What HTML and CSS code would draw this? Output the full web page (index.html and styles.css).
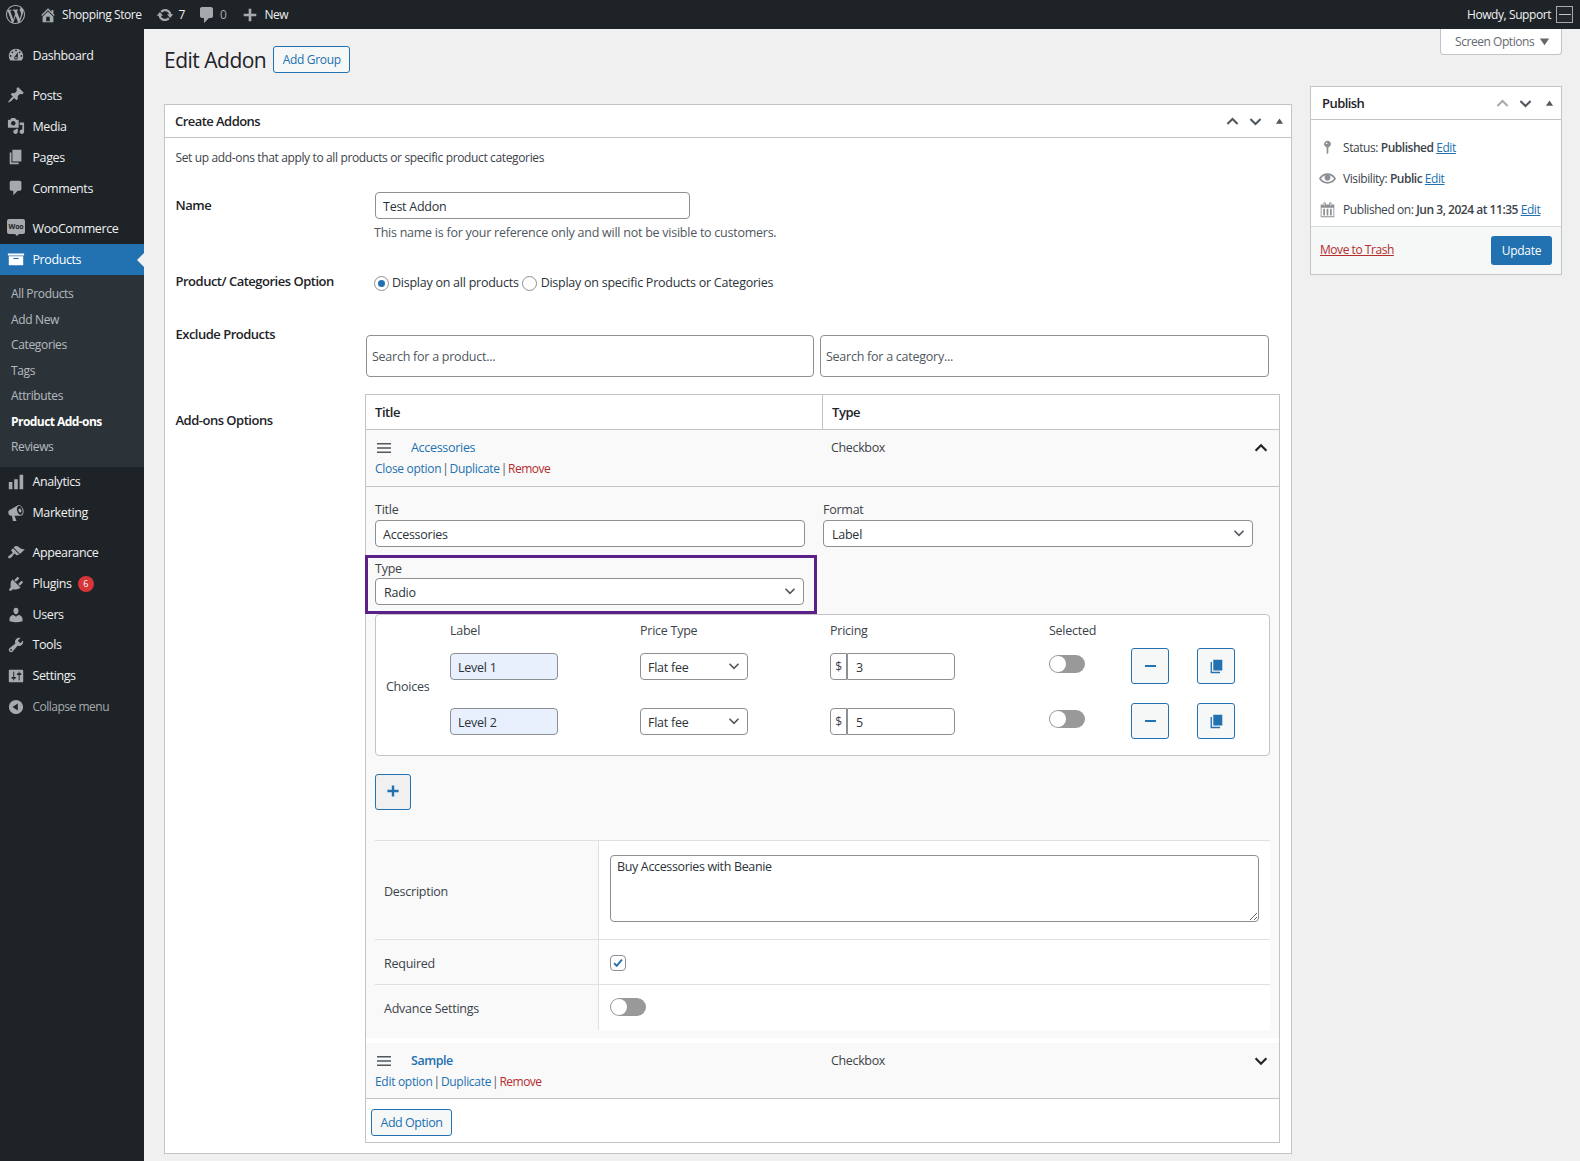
FILE: index.html
```html
<!DOCTYPE html>
<html lang="en">
<head>
    <meta charset="UTF-8">
    <title>Edit Addon</title>
    <link rel="stylesheet" href="styles.css">
</head>
<body>
    <svg class="sprite" xmlns="http://www.w3.org/2000/svg">
        <symbol id="i-wp" viewBox="0 0 20 20"><path d="M20 10c0-5.51-4.49-10-10-10C4.48 0 0 4.49 0 10c0 5.52 4.48 10 10 10 5.51 0 10-4.48 10-10zM7.78 15.37L4.37 6.22c.55-.02 1.17-.08 1.17-.08.5-.06.44-1.13-.06-1.11 0 0-1.45.11-2.37.11-.18 0-.37 0-.58-.01C4.12 2.69 6.87 1.11 10 1.11c2.33 0 4.45.87 6.05 2.34-.68-.11-1.65.39-1.65 1.58 0 .74.45 1.36.9 2.1.35.61.55 1.36.55 2.46 0 1.49-1.4 5-1.4 5l-3.03-8.37c.54-.02.82-.17.82-.17.5-.05.44-1.25-.06-1.22 0 0-1.44.12-2.38.12-.87 0-2.33-.12-2.33-.12-.5-.03-.56 1.2-.06 1.22l.92.08 1.26 3.41zM17.41 10c.24-.64.74-1.87.43-4.25.7 1.29 1.05 2.71 1.05 4.25 0 3.29-1.73 6.24-4.4 7.78.97-2.59 1.94-5.2 2.92-7.78zM6.1 18.09C3.12 16.65 1.11 13.53 1.11 10c0-1.3.23-2.48.72-3.59C3.25 10.3 4.67 14.2 6.1 18.09zm4.03-6.63l2.58 6.98c-.86.29-1.76.45-2.71.45-.79 0-1.57-.11-2.29-.33.81-2.38 1.62-4.74 2.42-7.1z"/></symbol>
        <symbol id="i-home" viewBox="0 0 20 20"><path d="M16 8.5l1.53 1.53-1.06 1.06L10 4.62l-6.47 6.47-1.06-1.06L10 2.5l4 4v-2h2v4zm-6-2.46l6 5.99V18H4v-5.97zM12 17v-5H8v5h4z"/></symbol>
        <symbol id="i-updates" viewBox="0 0 20 20"><path d="M10.2 3.28c3.53 0 6.43 2.61 6.92 6h2.08l-3.5 4-3.5-4h2.32c-.45-1.97-2.21-3.45-4.32-3.45-1.45 0-2.73.71-3.54 1.78L4.95 5.66C6.23 4.2 8.11 3.28 10.2 3.28zm-.4 13.44c-3.52 0-6.43-2.61-6.92-6H.8l3.5-4c1.17 1.33 2.33 2.67 3.5 4H5.48c.45 1.97 2.21 3.45 4.32 3.45 1.45 0 2.73-.71 3.54-1.78l1.71 1.95c-1.28 1.46-3.15 2.38-5.25 2.38z"/></symbol>
        <symbol id="i-comment" viewBox="0 0 20 20"><path d="M5 2h9c1.1 0 2 .9 2 2v7c0 1.1-.9 2-2 2h-2l-5 5v-5H5c-1.1 0-2-.9-2-2V4c0-1.1.9-2 2-2z"/></symbol>
        <symbol id="i-plus" viewBox="0 0 20 20"><path d="M17 8.5v3h-5.5V17h-3v-5.5H3v-3h5.5V3h3v5.5z"/></symbol>
        <symbol id="i-dashboard" viewBox="0 0 20 20"><path d="M3.76 16h12.48c1.1-1.37 1.76-3.11 1.76-5 0-4.42-3.58-8-8-8s-8 3.58-8 8c0 1.89.66 3.63 1.76 5zM10 4c.55 0 1 .45 1 1s-.45 1-1 1-1-.45-1-1 .45-1 1-1zM6 6c.55 0 1 .45 1 1s-.45 1-1 1-1-.45-1-1 .45-1 1-1zm8 0c.55 0 1 .45 1 1s-.45 1-1 1-1-.45-1-1 .45-1 1-1zm-5.37 5.55L12 7v6c0 1.1-.9 2-2 2s-2-.9-2-2c0-.57.24-1.08.63-1.45zM4 10c.55 0 1 .45 1 1s-.45 1-1 1-1-.45-1-1 .45-1 1-1zm12 0c.55 0 1 .45 1 1s-.45 1-1 1-1-.45-1-1 .45-1 1-1zm-5 3c0-.55-.45-1-1-1s-1 .45-1 1 .45 1 1 1 1-.45 1-1z" fill-rule="evenodd"/></symbol>
        <symbol id="i-post" viewBox="0 0 20 20"><path d="M10.44 3.02l1.82-1.82 6.36 6.35-1.83 1.82c-1.05-.68-2.48-.57-3.41.36l-.75.75c-.92.93-1.04 2.35-.35 3.41l-1.83 1.82-2.41-2.41-2.8 2.79c-.42.42-3.38 2.71-3.8 2.29s1.86-3.39 2.28-3.81l2.79-2.79L4.1 9.36l1.83-1.82c1.05.69 2.48.57 3.4-.36l.75-.75c.93-.92 1.05-2.35.36-3.41z"/></symbol>
        <symbol id="i-media" viewBox="0 0 20 20"><path d="M13 11V4c0-.55-.45-1-1-1h-1.67L9 1H5L3.67 3H2c-.55 0-1 .45-1 1v7c0 .55.45 1 1 1h10c.55 0 1-.45 1-1zM7 4.5c1.38 0 2.5 1.12 2.5 2.5S8.38 9.5 7 9.5 4.5 8.38 4.5 7 5.62 4.5 7 4.5zM14 6h5v10.5c0 1.38-1.12 2.5-2.5 2.5S14 17.88 14 16.5s1.12-2.5 2.5-2.5c.17 0 .34.02.5.05V9h-3V6zm-4 8.05V13h2v3.5c0 1.38-1.12 2.5-2.5 2.5S7 17.88 7 16.5 8.12 14 9.5 14c.17 0 .34.02.5.05z"/></symbol>
        <symbol id="i-page" viewBox="0 0 20 20"><path d="M6 15V2h10v13H6zm-1 1h8v2H3V5h2v11z"/></symbol>
        <symbol id="i-archive" viewBox="0 0 20 20"><path d="M19 4v2H1V4h18zM2 7h16v10H2V7zm11 3V9H7v1h6z"/></symbol>
        <symbol id="i-analytics" viewBox="0 0 20 20"><path d="M18 18V2h-4v16h4zm-6 0V7H8v11h4zm-6 0v-8H2v8h4z"/></symbol>
        <symbol id="i-megaphone" viewBox="0 0 20 20"><path d="M18.15 5.94c.46 1.62.38 3.22-.02 4.48-.42 1.28-1.26 2.18-2.3 2.48-.3.1-.5.1-.8.1H8.3l2.2 5.5c.02.3-.2.5-.48.5H7c-.25 0-.48-.2-.5-.5l-1-5.5H4.25c-1.2.1-2.2-1-2.6-2.5-.45-1.6 0-3.1 1-3.5l9-5.4c.25-.15.45-.25.75-.3 1.04-.3 2.24.1 3.22.98s1.84 2.24 2.53 3.66zM15.5 11.9c1.6-.45 2.3-3 1.6-5.7-.7-2.7-2.6-4.6-4.2-4.1-1.6.45-2.3 3-1.6 5.7.7 2.7 2.6 4.6 4.2 4.1zm-.6-2.4c-.9.2-1.7-.7-2-1.9-.3-1.3 0-2.5.9-2.7.9-.2 1.8.7 2.1 2 .3 1.2-.1 2.4-1 2.6z" fill-rule="evenodd"/></symbol>
        <symbol id="i-brush" viewBox="0 0 20 20"><path d="M14.48 11.06L7.41 3.99l1.5-1.5c.5-.56 2.3-.47 3.51.32 1.21.8 1.43 1.28 2.91 2.1 1.18.64 2.45 1.26 4.45.85zm-.71.71L6.7 4.7 4.93 6.47c-.39.39-.39 1.02 0 1.41l1.06 1.06c.39.39.39 1.03 0 1.42-.6.6-1.43 1.11-2.21 1.69-.35.26-.7.53-1.01.84C1.43 13.23.76 14.7 1.6 15.54c.83.83 2.3.17 3.64-1.17.31-.31.58-.66.84-1.01.58-.78 1.09-1.61 1.69-2.21.39-.39 1.02-.39 1.41 0l1.06 1.06c.39.39 1.02.39 1.41 0z"/></symbol>
        <symbol id="i-plugin" viewBox="0 0 20 20"><path d="M13.11 4.36L9.87 7.6 8 5.73l3.24-3.24c.35-.34 1.05-.2 1.56.32.52.51.66 1.21.31 1.55zm-8 1.77l.91-1.12 9.01 9.01-1.19.84c-.71.71-2.63 1.16-3.82 1.16H6.14L4.9 17.26c-.59.59-1.54.59-2.12 0-.59-.58-.59-1.53 0-2.12l1.24-1.24v-3.88c0-1.13.4-3.19 1.09-3.89zm7.26 3.97l3.24-3.24c.34-.35 1.04-.21 1.55.31.52.51.66 1.21.31 1.55l-3.24 3.25z"/></symbol>
        <symbol id="i-users" viewBox="0 0 20 20"><path d="M10 9.25c-2.27 0-2.73-3.44-2.73-3.44C7 4.02 7.82 2 9.97 2c2.16 0 2.98 2.02 2.71 3.81 0 0-.41 3.44-2.68 3.44zm0 2.57L12.72 10c2.39 0 4.52 2.33 4.52 4.53v2.49s-3.65 1.13-7.24 1.13c-3.65 0-7.24-1.13-7.24-1.13v-2.49c0-2.25 1.94-4.48 4.47-4.48z"/></symbol>
        <symbol id="i-tools" viewBox="0 0 20 20"><path d="M16.68 9.77c-1.34 1.34-3.3 1.67-4.95.99l-5.41 6.52c-.99.99-2.59.99-3.58 0s-.99-2.59 0-3.57l6.52-5.42c-.68-1.65-.35-3.61.99-4.95 1.28-1.28 3.12-1.62 4.72-1.06l-2.89 2.89 2.82 2.82 2.86-2.87c.53 1.58.18 3.39-1.08 4.67zM3.81 16.21c.4.39 1.04.39 1.43 0 .4-.4.4-1.04 0-1.43-.39-.4-1.03-.4-1.43 0-.39.39-.39 1.03 0 1.43z"/></symbol>
        <symbol id="i-settings" viewBox="0 0 20 20"><path d="M18 16V4c0-.55-.45-1-1-1H3c-.55 0-1 .45-1 1v12c0 .55.45 1 1 1h14c.55 0 1-.45 1-1zM8 11h1c.55 0 1 .45 1 1s-.45 1-1 1H8v1.5c0 .28-.22.5-.5.5s-.5-.22-.5-.5V13H6c-.55 0-1-.45-1-1s.45-1 1-1h1V5.5c0-.28.22-.5.5-.5s.5.22.5.5V11zm5-2h-1c-.55 0-1-.45-1-1s.45-1 1-1h1V5.5c0-.28.22-.5.5-.5s.5.22.5.5V7h1c.55 0 1 .45 1 1s-.45 1-1 1h-1v5.5c0 .28-.22.5-.5.5s-.5-.22-.5-.5V9z"/></symbol>
        <symbol id="i-collapse" viewBox="0 0 20 20"><path d="M10 2.16c4.33 0 7.84 3.51 7.84 7.84s-3.51 7.84-7.84 7.84S2.16 14.33 2.16 10 5.71 2.16 10 2.16zm2 11.72V6.12L6.18 9.97z"/></symbol>
        <symbol id="i-key" viewBox="0 0 20 20"><path d="M14 6c0 1.86-1.28 3.41-3 3.86V16c0 1-2 2-2 2V9.86c-1.72-.45-3-2-3-3.86 0-2.21 1.79-4 4-4s4 1.79 4 4zM8 5c0 .55.45 1 1 1s1-.45 1-1-.45-1-1-1-1 .45-1 1z"/></symbol>
        <symbol id="i-eye" viewBox="0 0 20 20"><path d="M19.7 9.4C17.7 6 14 3.9 10 3.9S2.3 6 .3 9.4L0 10l.3.6c2 3.4 5.7 5.5 9.7 5.5s7.7-2.1 9.7-5.5l.3-.6-.3-.6zM10 14.1c-3.1 0-6-1.6-7.7-4.1C3.6 8 5.7 6.6 8 6.1c-.9.6-1.5 1.7-1.5 2.9 0 1.9 1.6 3.5 3.5 3.5s3.5-1.6 3.5-3.5c0-1.2-.6-2.3-1.5-2.9 2.3.5 4.4 1.9 5.7 3.9-1.7 2.5-4.6 4.1-7.7 4.1z"/></symbol>
        <symbol id="i-calendar" viewBox="0 0 20 20"><path d="M15 4h3v15H2V4h3V3c0-.41.15-.76.44-1.06.29-.29.65-.44 1.06-.44s.77.15 1.06.44c.29.3.44.65.44 1.06v1h4V3c0-.41.15-.76.44-1.06.29-.29.65-.44 1.06-.44s.77.15 1.06.44c.29.3.44.65.44 1.06v1zM6 5.5c.41 0 .5-.09.5-.5V3c0-.41-.09-.5-.5-.5s-.5.09-.5.5v2c0 .41.09.5.5.5zm8 0c.41 0 .5-.09.5-.5V3c0-.41-.09-.5-.5-.5s-.5.09-.5.5v2c0 .41.09.5.5.5zM17 18V8H3v10h14zM5 9h2v8H5V9zm4 0h2v8H9V9zm4 0h2v8h-2V9z"/></symbol>
        <symbol id="i-copy" viewBox="0 0 20 20"><path d="M7 3h10v12H7zM5.5 5.5v11h9V18H4V5.5z"/></symbol>
        <symbol id="i-up" viewBox="0 0 20 20"><path d="M4 13l6-6 6 6" fill="none" stroke="currentColor" stroke-width="2.4"/></symbol>
        <symbol id="i-down" viewBox="0 0 20 20"><path d="M4 7l6 6 6-6" fill="none" stroke="currentColor" stroke-width="2.4"/></symbol>
        <symbol id="i-tri" viewBox="0 0 20 20"><path d="M10 5.5l5.5 8h-11z"/></symbol>
        <symbol id="i-menu" viewBox="0 0 14 12"><path d="M0 1h14v1.6H0zM0 5.2h14v1.6H0zM0 9.4h14V11H0z"/></symbol>
        <symbol id="i-sel" viewBox="0 0 20 20"><path d="M5 7.5l5 5 5-5" fill="none" stroke="currentColor" stroke-width="1.8"/></symbol>
    </svg>

    <header class="adminbar">
        <svg class="ab-logo"><use href="#i-wp"/></svg>
        <svg class="ab-icon ab-home"><use href="#i-home"/></svg>
        <span class="ab-text ab-site">Shopping Store</span>
        <svg class="ab-icon ab-updates"><use href="#i-updates"/></svg>
        <span class="ab-text ab-count">7</span>
        <svg class="ab-icon ab-comments"><use href="#i-comment"/></svg>
        <span class="ab-text ab-zero">0</span>
        <svg class="ab-icon ab-plus"><use href="#i-plus"/></svg>
        <span class="ab-text">New</span>
        <span class="ab-text ab-howdy">Howdy, Support</span>
        <span class="ab-avatar"><i></i></span>
    </header>

    <div class="wrap">
        <nav class="sidebar">
            <a class="menu-item"><svg><use href="#i-dashboard"/></svg>Dashboard</a>
            <div class="menu-sep"></div>
            <a class="menu-item"><svg><use href="#i-post"/></svg>Posts</a>
            <a class="menu-item"><svg><use href="#i-media"/></svg>Media</a>
            <a class="menu-item"><svg><use href="#i-page"/></svg>Pages</a>
            <a class="menu-item"><svg><use href="#i-comment"/></svg>Comments</a>
            <div class="menu-sep"></div>
            <a class="menu-item"><span class="woo-icon">Woo</span>WooCommerce</a>
            <a class="menu-item active"><svg><use href="#i-archive"/></svg>Products</a>
            <div class="submenu">
                <a>All Products</a>
                <a>Add New</a>
                <a>Categories</a>
                <a>Tags</a>
                <a>Attributes</a>
                <a class="current">Product Add-ons</a>
                <a>Reviews</a>
            </div>
            <a class="menu-item"><svg><use href="#i-analytics"/></svg>Analytics</a>
            <a class="menu-item"><svg><use href="#i-megaphone"/></svg>Marketing</a>
            <div class="menu-sep"></div>
            <a class="menu-item"><svg><use href="#i-brush"/></svg>Appearance</a>
            <a class="menu-item"><svg><use href="#i-plugin"/></svg>Plugins<span class="badge">6</span></a>
            <a class="menu-item tight"><svg><use href="#i-users"/></svg>Users</a>
            <a class="menu-item"><svg><use href="#i-tools"/></svg>Tools</a>
            <a class="menu-item"><svg><use href="#i-settings"/></svg>Settings</a>
            <a class="menu-item collapse"><svg><use href="#i-collapse"/></svg>Collapse menu</a>
        </nav>

        <main class="content">
            <div class="screen-options">Screen Options<svg><use href="#i-tri"/></svg></div>
            <div class="page-head">
                <h1>Edit Addon</h1>
                <a class="btn-outline add-group">Add Group</a>
            </div>
            <div class="columns">
                <section class="postbox main-box">
                    <div class="postbox-head">
                        <h2>Create Addons</h2>
                        <div class="handles">
                            <svg><use href="#i-up"/></svg>
                            <svg><use href="#i-down"/></svg>
                            <svg class="tri"><use href="#i-tri"/></svg>
                        </div>
                    </div>
                    <div class="postbox-body">
                        <p class="intro">Set up add-ons that apply to all products or specific product categories</p>

                        <div class="form-row name-row">
                            <label>Name</label>
                            <div>
                                <input class="field name-input" type="text" value="Test Addon">
                                <p class="hint">This name is for your reference only and will not be visible to customers.</p>
                            </div>
                        </div>

                        <div class="form-row option-row">
                            <label>Product/ Categories Option</label>
                            <div class="radios">
                                <span class="radio checked"></span><span>Display on all products</span>
                                <span class="radio"></span><span>Display on specific Products or Categories</span>
                            </div>
                        </div>

                        <div class="form-row exclude-row">
                            <label>Exclude Products</label>
                            <div class="search-pair">
                                <input class="search" type="text" placeholder="Search for a product...">
                                <input class="search" type="text" placeholder="Search for a category...">
                            </div>
                        </div>

                        <div class="form-row addons-row">
                            <label>Add-ons Options</label>
                            <div class="addons-table">
                                <div class="addons-head">
                                    <div>Title</div>
                                    <div>Type</div>
                                </div>

                                <div class="addon-row">
                                    <div class="addon-line">
                                        <svg class="drag"><use href="#i-menu"/></svg>
                                        <a class="addon-name">Accessories</a>
                                        <span class="addon-type">Checkbox</span>
                                        <svg class="addon-toggle"><use href="#i-up"/></svg>
                                    </div>
                                    <div class="addon-actions"><a>Close option</a><span class="sep">|</span><a>Duplicate</a><span class="sep">|</span><a class="danger">Remove</a></div>
                                </div>

                                <div class="addon-panel">
                                    <div class="two-cols">
                                        <div>
                                            <div class="field-label">Title</div>
                                            <input class="field full" type="text" value="Accessories">
                                        </div>
                                        <div>
                                            <div class="field-label">Format</div>
                                            <div class="select full">Label<svg><use href="#i-sel"/></svg></div>
                                        </div>
                                    </div>

                                    <div class="type-highlight">
                                        <div class="field-label">Type</div>
                                        <div class="select">Radio<svg><use href="#i-sel"/></svg></div>
                                    </div>

                                    <div class="choices">
                                        <div class="choices-title">Choices</div>
                                        <div class="ch-head ch-c2">Label</div>
                                        <div class="ch-head">Price Type</div>
                                        <div class="ch-head">Pricing</div>
                                        <div class="ch-head">Selected</div>
                                        <div class="ch-head ch-wide"></div>

                                        <div class="ch-cell ch-c2"><input class="field level" type="text" value="Level 1"></div>
                                        <div class="ch-cell"><div class="select small">Flat fee<svg><use href="#i-sel"/></svg></div></div>
                                        <div class="ch-cell"><div class="price"><span>$</span><input type="text" value="3"></div></div>
                                        <div class="ch-cell"><span class="toggle"></span></div>
                                        <div class="ch-cell"><a class="icon-btn"><span class="minus"></span></a></div>
                                        <div class="ch-cell"><a class="icon-btn"><svg><use href="#i-copy"/></svg></a></div>

                                        <div class="ch-cell ch-c2"><input class="field level" type="text" value="Level 2"></div>
                                        <div class="ch-cell"><div class="select small">Flat fee<svg><use href="#i-sel"/></svg></div></div>
                                        <div class="ch-cell"><div class="price"><span>$</span><input type="text" value="5"></div></div>
                                        <div class="ch-cell"><span class="toggle"></span></div>
                                        <div class="ch-cell"><a class="icon-btn"><span class="minus"></span></a></div>
                                        <div class="ch-cell"><a class="icon-btn"><svg><use href="#i-copy"/></svg></a></div>
                                    </div>

                                    <a class="add-choice"><svg><use href="#i-plus"/></svg></a>

                                    <div class="settings-table">
                                        <div class="set-label set-desc">Description</div>
                                        <div class="set-value set-desc"><textarea class="desc">Buy Accessories with Beanie</textarea></div>
                                        <div class="set-label set-req">Required</div>
                                        <div class="set-value set-req"><span class="check"><svg viewBox="0 0 16 16"><path d="M3.5 8.2l3 3 6-7" fill="none" stroke="#2271b1" stroke-width="2.2"/></svg></span></div>
                                        <div class="set-label set-adv">Advance Settings</div>
                                        <div class="set-value set-adv"><span class="toggle"></span></div>
                                    </div>
                                </div>

                                <div class="addon-row sample">
                                    <div class="addon-line">
                                        <svg class="drag"><use href="#i-menu"/></svg>
                                        <a class="addon-name bold">Sample</a>
                                        <span class="addon-type">Checkbox</span>
                                        <svg class="addon-toggle"><use href="#i-down"/></svg>
                                    </div>
                                    <div class="addon-actions"><a>Edit option</a><span class="sep">|</span><a>Duplicate</a><span class="sep">|</span><a class="danger">Remove</a></div>
                                </div>

                                <div class="addons-foot">
                                    <a class="btn-outline">Add Option</a>
                                </div>
                            </div>
                        </div>
                    </div>
                </section>

                <aside class="postbox publish">
                    <div class="postbox-head">
                        <h2>Publish</h2>
                        <div class="handles">
                            <svg class="faded"><use href="#i-up"/></svg>
                            <svg><use href="#i-down"/></svg>
                            <svg class="tri"><use href="#i-tri"/></svg>
                        </div>
                    </div>
                    <div class="pub-body">
                        <div class="pub-line"><svg><use href="#i-key"/></svg>Status: <b>Published</b> <a>Edit</a></div>
                        <div class="pub-line"><svg><use href="#i-eye"/></svg>Visibility: <b>Public</b> <a>Edit</a></div>
                        <div class="pub-line"><svg><use href="#i-calendar"/></svg>Published on: <b>Jun 3, 2024 at 11:35</b> <a>Edit</a></div>
                    </div>
                    <div class="pub-foot">
                        <a class="trash">Move to Trash</a>
                        <a class="btn-primary">Update</a>
                    </div>
                </aside>
            </div>
        </main>
    </div>
</body>
</html>
```

FILE: styles.css
```css
* { box-sizing: border-box; }
html, body { margin: 0; height: 100%; }
body {
    background: #f0f0f1;
    color: #3c434a;
    font-family: "Open Sans", "Noto Sans", sans-serif;
    font-size: 12.5px;
    line-height: 20px;
    letter-spacing: -0.25px;
    overflow: hidden;
}
p { margin: 0; }
a { color: #2271b1; }
input, textarea { font-family: inherit; letter-spacing: inherit; }
.sprite { display: none; }

/* top bar */
.adminbar {
    height: 29px;
    background: #1d2327;
    display: flex;
    align-items: center;
    color: #f0f0f1;
    padding-left: 6px;
}
.ab-logo { width: 19px; height: 19px; fill: #a7aaad; margin-right: 14px; }
.ab-icon { width: 18px; height: 18px; fill: #a7aaad; flex: none; }
.ab-text { font-size: 12px; letter-spacing: -0.43px; }
.ab-home { margin-right: 5px; }
.ab-site { margin-right: 14px; }
.ab-updates { margin-right: 5px; }
.ab-count { margin-right: 12px; }
.ab-comments { width: 20px; height: 20px; margin-right: 3px; }
.ab-zero { color: #a7aaad; margin-right: 15px; }
.ab-plus { margin-right: 5px; }
.ab-howdy { margin-left: auto; margin-right: 5px; }
.ab-avatar {
    width: 17px;
    height: 17px;
    border: 1px solid #a7aaad;
    background: #23282d;
    margin-right: 7px;
    display: flex;
    align-items: center;
    justify-content: center;
}
.ab-avatar i { width: 12px; height: 1px; background: #c3c4c7; }

/* left menu */
.wrap { display: flex; height: 1132px; }
.sidebar {
    width: 144px;
    flex: none;
    background: #1d2327;
    padding-top: 11px;
}
.menu-item {
    display: flex;
    align-items: center;
    height: 31px;
    padding-left: 32.5px;
    position: relative;
    color: #f0f0f1;
    font-size: 12.5px;
    letter-spacing: -0.4px;
}
.menu-item.tight { height: 30px; }
.menu-item svg {
    position: absolute;
    left: 7px;
    top: 6px;
    width: 18px;
    height: 18px;
    fill: #a7aaad;
}
.menu-sep { height: 9px; }
.menu-item.active { background: #2271b1; color: #fff; }
.menu-item.active svg { fill: #fff; }
.menu-item.active::after {
    content: "";
    position: absolute;
    right: 0;
    top: 9px;
    border: 7px solid transparent;
    border-right-color: #f0f0f1;
    border-left-width: 0;
}
.woo-icon {
    position: absolute;
    left: 7px;
    top: 6px;
    width: 18px;
    height: 15px;
    border-radius: 2px;
    background: #a7aaad;
    color: #1d2327;
    font-size: 7px;
    font-weight: 700;
    line-height: 15px;
    text-align: center;
    letter-spacing: -0.2px;
}
.woo-icon::after {
    content: "";
    position: absolute;
    left: 8px;
    top: 15px;
    border: 2px solid transparent;
    border-top-color: #a7aaad;
}
.submenu {
    background: #2c3338;
    padding: 6px 0 7px;
}
.submenu a {
    display: block;
    height: 25.5px;
    line-height: 25px;
    padding-left: 11px;
    color: rgba(240, 246, 252, 0.7);
    font-size: 12px;
    letter-spacing: -0.35px;
}
.submenu a.current { color: #fff; font-weight: 700; letter-spacing: -0.55px; }
.badge {
    width: 16px;
    height: 16px;
    border-radius: 50%;
    background: #d63638;
    color: #fff;
    font-size: 9px;
    line-height: 16px;
    text-align: center;
    margin-left: 6px;
}
.collapse { color: #a7aaad; font-size: 12px; letter-spacing: -0.5px; }

/* content */
.content { flex: 1; padding: 17px 18px 0 20px; min-width: 0; }
.screen-options {
    float: right;
    margin-top: -17px;
    width: 122px;
    height: 26px;
    background: #fff;
    border: 1px solid #c3c4c7;
    border-top: 0;
    border-radius: 0 0 4px 4px;
    padding-left: 14px;
    font-size: 12px;
    letter-spacing: -0.45px;
    line-height: 26px;
    color: #646970;
    display: flex;
    align-items: center;
}
.screen-options svg { width: 17px; height: 17px; fill: #646970; margin-left: 2px; transform: rotate(180deg); }
.page-head { display: flex; align-items: center; height: 27px; }
.page-head h1 {
    margin: 0 7px 0 0;
    font-size: 21px;
    font-weight: 400;
    color: #1d2327;
    letter-spacing: -0.5px;
}
.btn-outline {
    display: block;
    height: 27px;
    line-height: 25px;
    text-align: center;
    border: 1px solid #2271b1;
    border-radius: 3px;
    background: #f6f7f7;
    font-size: 12px;
    letter-spacing: -0.3px;
}
.add-group { width: 77px; }
.columns {
    display: grid;
    grid-template-columns: 1128px 252px;
    column-gap: 18px;
    align-items: start;
    margin-top: 13px;
}
.postbox { background: #fff; border: 1px solid #c3c4c7; }
.main-box { margin-top: 18px; height: 1050px; }
.postbox-head {
    height: 33px;
    border-bottom: 1px solid #c3c4c7;
    display: flex;
    align-items: center;
    justify-content: space-between;
    padding: 0 5px 0 10px;
}
.publish .postbox-head { padding-left: 11px; }
.postbox-head h2 { margin: 0; font-size: 13px; font-weight: 600; color: #1d2327; letter-spacing: -0.55px; }
.handles { display: flex; align-items: center; gap: 6px; color: #50575e; }
.handles svg { width: 17px; height: 17px; fill: currentColor; }
.handles .tri { width: 13px; height: 13px; margin-left: 3px; fill: #50575e; }
.handles .faded { color: #a7aaad; }
.postbox-body { padding: 10px 0 0 10.5px; }
.intro { font-size: 12px; letter-spacing: -0.36px; }

.form-row { display: flex; }
.form-row > label { flex: none; font-size: 13px; font-weight: 600; color: #1d2327; letter-spacing: -0.5px; }
.name-row { margin-top: 24px; }
.name-row > label { width: 199.5px; margin-top: 3px; }
.option-row { margin-top: 30px; }
.option-row > label { width: 198.5px; margin-top: -2px; }
.exclude-row { margin-top: 42px; }
.exclude-row > label { width: 190.5px; margin-top: -11px; }
.addons-row { margin-top: 17px; }
.addons-row > label { width: 189.5px; margin-top: 16px; }

.field {
    height: 27px;
    border: 1px solid #8c8f94;
    border-radius: 4px;
    background: #fff;
    padding: 2px 7px 0;
    font-size: 12.5px;
    color: #2c3338;
    display: block;
}
.name-input { width: 315px; }
.full { width: 100%; }
.hint { margin: 4px 0 0 -1px; color: #50575e; }
.radios { display: flex; align-items: center; color: #2c3338; }
.radio {
    width: 15px;
    height: 15px;
    border: 1px solid #8c8f94;
    border-radius: 50%;
    background: #fff;
    margin: 0 4px 0 3px;
    display: flex;
    align-items: center;
    justify-content: center;
    flex: none;
}
.radio:first-child { margin: 0 3px 0 0; }
.radio.checked::before {
    content: "";
    width: 7px;
    height: 7px;
    border-radius: 50%;
    background: #2271b1;
}
.search-pair { display: flex; gap: 6px; }
.search {
    width: 448px;
    height: 42px;
    border: 1px solid #8c8f94;
    border-radius: 4px;
    padding: 0 5px;
    font-size: 12.5px;
    background: #fff;
}
.search + .search { width: 449px; }
.search::placeholder { color: #50575e; opacity: 1; }

/* add-ons table */
.addons-table { width: 915px; height: 749px; border: 1px solid #c3c4c7; position: relative; }
.addons-head {
    height: 35px;
    border-bottom: 1px solid #c3c4c7;
    display: flex;
    font-weight: 600;
    font-size: 13px;
    letter-spacing: -0.45px;
    color: #1d2327;
}
.addons-head div { line-height: 34px; padding-left: 9px; width: 456px; }
.addons-head div + div { border-left: 1px solid #c3c4c7; width: auto; }
.addon-row {
    height: 57px;
    padding: 8px 0 0 9px;
    background: #f9f9f9;
    border-bottom: 1px solid #c3c4c7;
}
.addon-line { display: flex; align-items: center; height: 20px; position: relative; }
.drag { width: 14px; height: 12px; fill: #50575e; margin-left: 2px; flex: none; }
.addon-name { margin-left: 20px; width: 420px; font-size: 12.5px; flex: none; letter-spacing: -0.3px; }
.addon-name.bold { font-weight: 600; letter-spacing: -0.45px; }
.addon-type { font-size: 12.5px; letter-spacing: -0.35px; }
.addon-toggle {
    position: absolute;
    right: 9px;
    top: 1px;
    width: 18px;
    height: 18px;
    color: #1d2327;
}
.addon-actions { margin-top: 1px; font-size: 12px; color: #50575e; letter-spacing: -0.3px; }
.sep { margin: 0 1px; }
.danger { color: #b32d2e; letter-spacing: -0.5px; }

.addon-panel { height: 551px; background: #f9f9f9; padding: 12px 9px 0; }
.two-cols { display: grid; grid-template-columns: 430px 430px; column-gap: 18px; }
.field-label { height: 21px; padding-top: 1px; color: #3c434a; font-size: 12.5px; }
.select {
    height: 27px;
    width: 429px;
    border: 1px solid #8c8f94;
    border-radius: 4px;
    background: #fff;
    padding-left: 8px;
    font-size: 12.5px;
    line-height: 27px;
    color: #2c3338;
    position: relative;
}
.select.full { width: 100%; }
.select svg {
    position: absolute;
    right: 4px;
    top: 3px;
    width: 18px;
    height: 18px;
    color: #50575e;
}
.select.small { width: 108px; padding-left: 7px; }
.type-highlight {
    width: 452px;
    height: 59px;
    margin: 8px 0 0 -10px;
    border: 3px solid #5b2189;
    padding: 0 7px;
}
.type-highlight .field-label { height: 20px; }

/* choices grid */
.choices {
    width: 895px;
    height: 142px;
    background: #fff;
    border: 1px solid #c3c4c7;
    border-radius: 4px;
    padding-left: 10px;
    display: grid;
    grid-template-columns: 64px 190px 190px 219px 82px 66px 38px;
    grid-template-rows: 33px 36px 55px;
    align-content: start;
}
.ch-head { font-size: 12.5px; padding-top: 6px; color: #3c434a; }
.ch-c2 { grid-column: 2; }
.ch-wide { grid-column: 6 / 8; }
.choices-title { grid-column: 1; grid-row: 1 / 5; font-size: 12.5px; padding-top: 62px; }
.ch-cell { height: 36px; }
.choices .ch-cell:nth-child(n+13) { margin-top: 19px; }
.level { width: 108px; height: 27px; margin-top: 5px; background: #e8f0fe; }
.ch-cell .select { margin-top: 5px; }
.price {
    margin-top: 5px;
    width: 125px;
    height: 27px;
    display: flex;
}
.price span {
    width: 17px;
    border: 1px solid #8c8f94;
    border-radius: 4px 0 0 4px;
    text-align: center;
    line-height: 26px;
    font-size: 12px;
}
.price input {
    flex: 1;
    min-width: 0;
    border: 1px solid #8c8f94;
    border-radius: 0 4px 4px 0;
    padding: 2px 8px 0;
    font-size: 12.5px;
    color: #2c3338;
}
.toggle {
    display: block;
    width: 36px;
    height: 18px;
    border-radius: 9px;
    background: #999;
    position: relative;
    margin-top: 7px;
}
.toggle::before {
    content: "";
    position: absolute;
    left: 1px;
    top: 1px;
    width: 16px;
    height: 16px;
    border-radius: 50%;
    background: #fff;
}
.icon-btn {
    width: 38px;
    height: 36px;
    border: 1px solid #2271b1;
    border-radius: 3px;
    background: #f6f7f7;
    display: flex;
    align-items: center;
    justify-content: center;
}
.icon-btn svg { width: 18px; height: 18px; fill: #2271b1; }
.minus { width: 11px; height: 2px; background: #2271b1; }
.add-choice {
    width: 36px;
    height: 36px;
    margin-top: 18px;
    padding-bottom: 2px;
    border: 1px solid #2271b1;
    border-radius: 3px;
    background: #f0f0f1;
    display: flex;
    align-items: center;
    justify-content: center;
}
.add-choice svg { width: 16px; height: 16px; fill: #2271b1; }

/* description, required, advance settings */
.settings-table {
    width: 895px;
    margin-top: 30px;
    border-top: 1px solid #e0e0e0;
    display: grid;
    grid-template-columns: 224px 671px;
    grid-template-rows: 99px 45px 45px;
}
.set-label { padding-left: 9px; display: flex; align-items: center; border-right: 1px solid #e0e0e0; font-size: 12.5px; }
.set-desc.set-label, .set-req.set-label { padding-top: 4px; }
.set-value { background: #fff; padding-left: 11px; }
.set-desc, .set-req { border-bottom: 1px solid #e0e0e0; }
.set-value.set-desc { padding-top: 14px; }
.desc {
    width: 649px;
    height: 67px;
    display: block;
    border: 1px solid #8c8f94;
    border-radius: 4px;
    padding: 2px 6px;
    font-size: 12.5px;
    letter-spacing: -0.35px;
    line-height: 18px;
    color: #2c3338;
}
.check {
    display: block;
    width: 16px;
    height: 16px;
    margin-top: 15px;
    border: 1px solid #8c8f94;
    border-radius: 4px;
    background: #fff;
}
.check svg { display: block; width: 14px; height: 14px; }
.set-value.set-adv .toggle { margin-top: 13px; }
.set-label.set-adv { align-items: flex-start; padding-top: 14px; }

.sample.addon-row { margin-top: 5px; height: 56px; }
.addons-foot { padding: 10px 0 0 5px; }
.addons-foot .btn-outline { display: inline-block; width: 81px; font-size: 12.5px; letter-spacing: -0.45px; }

/* publish box */
.pub-body { height: 106px; padding: 18px 0 0 10px; }
.pub-line {
    height: 31px;
    line-height: 20px;
    padding-left: 22px;
    position: relative;
    font-size: 12px;
    letter-spacing: -0.42px;
}
.pub-line b { font-weight: 600; color: #3c434a; letter-spacing: -0.48px; }
.pub-line a { text-decoration: underline; }
.pub-line svg {
    position: absolute;
    left: -2px;
    top: 1px;
    width: 17px;
    height: 17px;
    fill: #8c8f94;
}
.pub-foot {
    height: 48px;
    border-top: 1px solid #dcdcde;
    background: #f6f7f7;
    display: flex;
    align-items: center;
    justify-content: space-between;
    padding: 0 9px;
}
.trash { color: #b32d2e; text-decoration: underline; font-size: 12px; letter-spacing: -0.45px; margin-bottom: 2px; }
.btn-primary {
    width: 61px;
    height: 29px;
    line-height: 29px;
    text-align: center;
    border-radius: 3px;
    background: #2271b1;
    color: #fff;
    font-size: 12px;
}
```
